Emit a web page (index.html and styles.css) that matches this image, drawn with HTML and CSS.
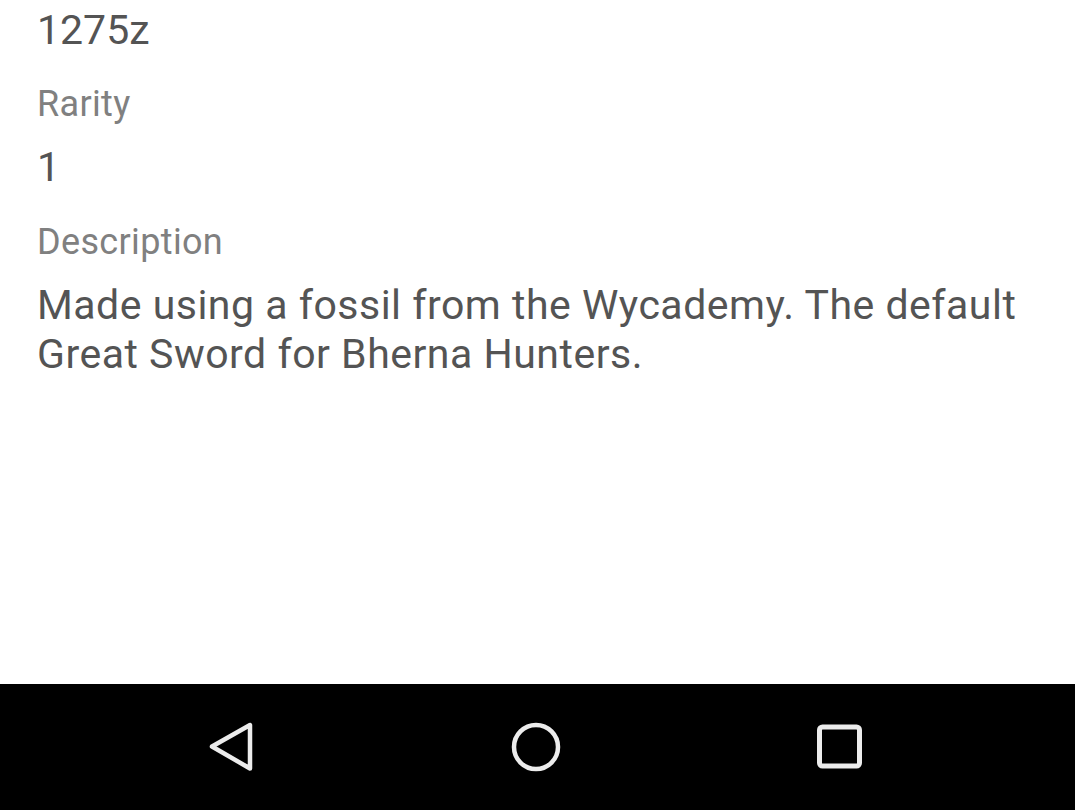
FILE: index.html
```html
<!DOCTYPE html>
<html>
<head>
<meta charset="utf-8">
<link rel="stylesheet" href="styles.css">
</head>
<body>
<div class="screen">
  <main class="content">
    <div class="value first">1275z</div>
    <div class="field">
      <div class="label">Rarity</div>
      <div class="value">1</div>
    </div>
    <div class="field field-desc">
      <div class="label">Description</div>
      <div class="value desc">Made using a fossil from the Wycademy. The default Great Sword for Bherna Hunters.</div>
    </div>
  </main>
  <nav class="navbar">
    <svg class="nav-icon" width="60" height="60" viewBox="0 0 60 60">
      <path d="M11 29.5 L49 8 L49 51.5 Z" fill="none" stroke="#ececec" stroke-width="4.5" stroke-linejoin="round"/>
    </svg>
    <svg class="nav-icon" width="60" height="60" viewBox="0 0 60 60">
      <circle cx="30" cy="30" r="22" fill="none" stroke="#ececec" stroke-width="4.5"/>
    </svg>
    <svg class="nav-icon" width="60" height="60" viewBox="0 0 60 60">
      <rect x="8.5" y="10" width="40" height="39" rx="3" fill="none" stroke="#ececec" stroke-width="5"/>
    </svg>
  </nav>
</div>
</body>
</html>
```

FILE: styles.css
```css
html, body {
  margin: 0;
  padding: 0;
  background: #ffffff;
}
.screen {
  width: 1075px;
  height: 810px;
  display: flex;
  flex-direction: column;
  overflow: hidden;
  font-family: Roboto, "Noto Sans", sans-serif;
}
.content {
  flex: 1;
  padding: 0 37px;
}
.value {
  font-size: 41px;
  line-height: 48px;
  color: #545454;
  margin-top: 17px;
}
.value.first {
  margin-top: 6px;
}
.field {
  margin-top: 28px;
}
.field.field-desc {
  margin-top: 29px;
}
.label {
  font-size: 36px;
  line-height: 44px;
  letter-spacing: 0.35px;
  color: #808080;
}
.value.desc {
  line-height: 49px;
  letter-spacing: 0.5px;
  margin-top: 17px;
}
.navbar {
  height: 126px;
  background: #000000;
  display: flex;
  align-items: center;
  padding-left: 201px;
  gap: 245px;
}
.nav-icon {
  display: block;
}
```
